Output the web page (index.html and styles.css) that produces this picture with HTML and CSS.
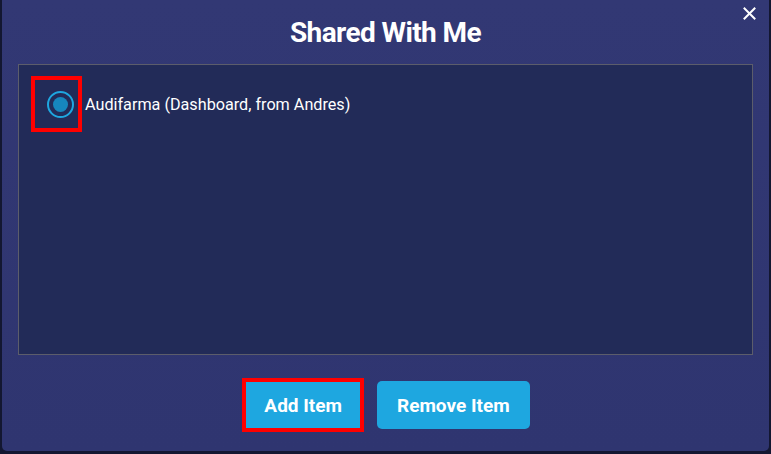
FILE: index.html
```html
<!DOCTYPE html>
<html lang="en">
<head>
  <meta charset="UTF-8" />
  <title>Shared With Me</title>
  <link rel="stylesheet" href="styles.css">
</head>
<body>

<div class="modal">
  <button class="close-btn" aria-label="Close">
    <svg width="13" height="13" viewBox="0 0 13 13"><path d="M1.5 1.5 L11.5 11.5 M11.5 1.5 L1.5 11.5" stroke="#fff" stroke-width="2" stroke-linecap="square"/></svg>
  </button>

  <h2 class="modal-title">Shared With Me</h2>

  <div class="item-list">
    <label class="item">
      <span class="radio-mark">
        <span class="radio selected"></span>
      </span>
      <span class="item-name">Audifarma (Dashboard, from Andres)</span>
    </label>
  </div>

  <div class="actions">
    <button class="action-btn marked">Add Item</button>
    <button class="action-btn">Remove Item</button>
  </div>
</div>

</body>
</html>
```

FILE: styles.css
```css
* {
  margin: 0;
  padding: 0;
  box-sizing: border-box;
}

html, body {
  height: 100%;
}

body {
  background-color: #131731;
  font-family: Roboto, 'Noto Sans', sans-serif;
  padding: 0 2px 3px 2px;
}

.modal {
  position: relative;
  height: 451px;
  background: linear-gradient(#323874, #2f3570);
  border-radius: 0 0 5px 5px;
  display: flex;
  flex-direction: column;
  padding: 0 16px;
}

.close-btn {
  position: absolute;
  top: 7px;
  right: 13px;
  background: none;
  border: none;
  cursor: pointer;
  display: flex;
}

.modal-title {
  color: #fff;
  text-align: center;
  font-size: 28px;
  font-weight: bold;
  letter-spacing: -0.6px;
  line-height: 32px;
  padding: 17px 0 15px;
}

.item-list {
  height: 291px;
  background-color: #222b58;
  border: 1px solid #5c5d6b;
  padding: 11px 12px;
}

.item {
  display: flex;
  align-items: center;
  gap: 3px;
  color: #fff;
  cursor: pointer;
}

.radio-mark {
  width: 51px;
  height: 56px;
  border: 4px solid #f00;
  display: flex;
  align-items: center;
  justify-content: center;
  padding-left: 8px;
}

.radio {
  width: 27px;
  height: 27px;
  border: 2px solid #1ea7e0;
  border-radius: 50%;
  display: flex;
  align-items: center;
  justify-content: center;
}

.radio.selected::after {
  content: '';
  width: 15px;
  height: 15px;
  border-radius: 50%;
  background-color: #1686bd;
}

.item-name {
  font-size: 16.2px;
}

.actions {
  display: flex;
  justify-content: center;
  gap: 16px;
  margin-top: 26px;
  padding-left: 4px;
}

.action-btn {
  background-color: #1ea7e0;
  color: #fff;
  border: none;
  border-radius: 5px;
  height: 48px;
  padding: 0 20px;
  font-family: Roboto, sans-serif;
  font-size: 19px;
  font-weight: bold;
  cursor: pointer;
}

.action-btn.marked {
  border-radius: 0;
  outline: 4px solid #f00;
  outline-offset: -1px;
  padding: 0 19px;
}
```
